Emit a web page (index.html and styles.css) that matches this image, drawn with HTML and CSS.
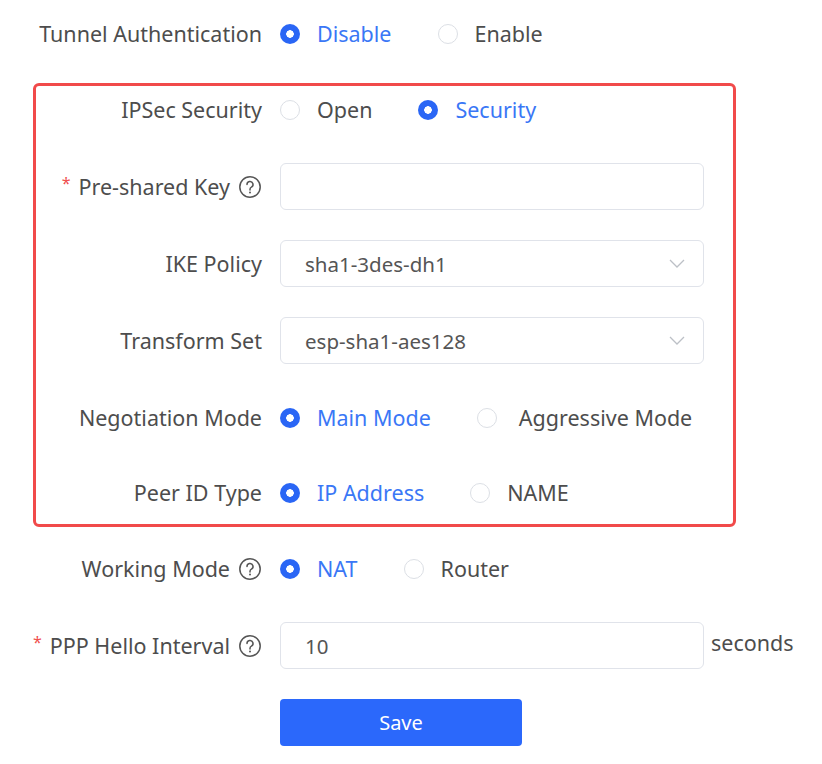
FILE: index.html
```html
<!DOCTYPE html>
<html lang="en">
<head>
    <meta charset="UTF-8">
    <meta name="viewport" content="width=device-width, initial-scale=1.0">
    <title>IPSec Settings</title>
    <link rel="stylesheet" href="styles.css">
</head>
<body>
    <form class="settings-form" onsubmit="return false">
        <div class="form-row">
            <label class="form-label">Tunnel Authentication</label>
            <div class="radio-group">
                <span class="radio checked"><i></i>Disable</span>
                <span class="radio"><i></i>Enable</span>
            </div>
        </div>

        <div class="highlight-box">
            <div class="form-row">
                <label class="form-label">IPSec Security</label>
                <div class="radio-group">
                    <span class="radio"><i></i>Open</span>
                    <span class="radio checked"><i></i>Security</span>
                </div>
            </div>

            <div class="form-row">
                <label class="form-label"><em class="required">*</em>Pre-shared Key
                    <svg class="help-icon" viewBox="0 0 24 24"><circle cx="12" cy="12" r="10.2"/><path d="M9 9.6a3 3 0 1 1 4.4 2.6c-.9.5-1.4 1-1.4 2v.8"/><circle class="dot" cx="12" cy="17.6" r="1"/></svg>
                </label>
                <input class="text-input" type="text">
            </div>

            <div class="form-row">
                <label class="form-label">IKE Policy</label>
                <div class="select">
                    <span>sha1-3des-dh1</span>
                    <svg class="chevron" viewBox="0 0 16 9"><polyline points="1,1 8,8 15,1"/></svg>
                </div>
            </div>

            <div class="form-row">
                <label class="form-label">Transform Set</label>
                <div class="select">
                    <span>esp-sha1-aes128</span>
                    <svg class="chevron" viewBox="0 0 16 9"><polyline points="1,1 8,8 15,1"/></svg>
                </div>
            </div>

            <div class="form-row">
                <label class="form-label">Negotiation Mode</label>
                <div class="radio-group">
                    <span class="radio checked"><i></i>Main Mode</span>
                    <span class="radio wide"><i></i>Aggressive Mode</span>
                </div>
            </div>

            <div class="form-row">
                <label class="form-label">Peer ID Type</label>
                <div class="radio-group">
                    <span class="radio checked"><i></i>IP Address</span>
                    <span class="radio"><i></i>NAME</span>
                </div>
            </div>
        </div>

        <div class="form-row">
            <label class="form-label">Working Mode
                <svg class="help-icon" viewBox="0 0 24 24"><circle cx="12" cy="12" r="10.2"/><path d="M9 9.6a3 3 0 1 1 4.4 2.6c-.9.5-1.4 1-1.4 2v.8"/><circle class="dot" cx="12" cy="17.6" r="1"/></svg>
            </label>
            <div class="radio-group">
                <span class="radio checked"><i></i>NAT</span>
                <span class="radio"><i></i>Router</span>
            </div>
        </div>

        <div class="form-row">
            <label class="form-label"><em class="required">*</em>PPP Hello Interval
                <svg class="help-icon" viewBox="0 0 24 24"><circle cx="12" cy="12" r="10.2"/><path d="M9 9.6a3 3 0 1 1 4.4 2.6c-.9.5-1.4 1-1.4 2v.8"/><circle class="dot" cx="12" cy="17.6" r="1"/></svg>
            </label>
            <input class="text-input" type="text" value="10">
            <span class="unit">seconds</span>
        </div>

        <div class="form-row">
            <span></span>
            <button class="save-btn" type="submit">Save</button>
        </div>
    </form>
</body>
</html>
```

FILE: styles.css
```css
body {
    margin: 0;
    background-color: #fff;
    font-family: "Noto Sans", "Open Sans", Arial, sans-serif;
    font-size: 21.5px;
    color: #4d4d4d;
}

.settings-form {
    --label-w: 262px;
    padding-top: 10px;
}

.form-row {
    display: grid;
    grid-template-columns: var(--label-w) 424px auto;
    column-gap: 18px;
    align-items: center;
    height: 47px;
    margin-bottom: 30px;
}

.form-label {
    display: flex;
    justify-content: flex-end;
    align-items: center;
    white-space: nowrap;
}

.required {
    font-style: normal;
    color: #f04f4f;
    font-size: 16px;
    margin-right: 8px;
    position: relative;
    top: -4px;
}

.help-icon {
    width: 24px;
    height: 24px;
    margin-left: 8px;
    fill: none;
    stroke: #555;
    stroke-width: 1.5;
    stroke-linecap: round;
}

.help-icon .dot {
    fill: #555;
    stroke: none;
}

.highlight-box {
    --label-w: 226px;
    margin: -4px 86px 18px 33px;
    border: 3px solid #f14a4a;
    border-radius: 6px;
    padding-bottom: 8px;
}

.highlight-box .form-row:nth-last-child(2) {
    margin-bottom: 28px;
}

.highlight-box .form-row:last-child {
    margin-bottom: 0;
}

.radio-group {
    display: flex;
    align-items: center;
    gap: 46px;
    white-space: nowrap;
}

.radio {
    display: flex;
    align-items: center;
    gap: 17px;
}

.radio.wide {
    gap: 22px;
}

.radio i {
    width: 18px;
    height: 18px;
    border: 1px solid #dcdfe5;
    border-radius: 50%;
    box-sizing: content-box;
    flex-shrink: 0;
}

.radio.checked {
    color: #3a77f6;
}

.radio.checked i {
    width: 20px;
    height: 20px;
    border: none;
    box-sizing: border-box;
    background: radial-gradient(circle, #fff 0 3.5px, #2a66f5 4px);
}

.text-input,
.select {
    box-sizing: border-box;
    width: 424px;
    height: 47px;
    border: 1px solid #e0e3ea;
    border-radius: 6px;
    padding: 0 18px 0 24px;
    font-family: inherit;
    font-size: 20.5px;
    color: #555;
    outline: none;
    background: #fff;
}

.select {
    display: flex;
    align-items: center;
    justify-content: space-between;
}

.chevron {
    width: 16px;
    height: 9px;
    fill: none;
    stroke: #bcc0c6;
    stroke-width: 1.3;
}

.unit {
    margin-left: -11px;
    margin-top: -6px;
}

.save-btn {
    width: 242px;
    height: 47px;
    border: none;
    border-radius: 4px;
    background-color: #2b68fb;
    color: #fff;
    font-family: inherit;
    font-size: 20px;
    cursor: pointer;
}

.save-btn:hover {
    background-color: #1f58e0;
}
```
